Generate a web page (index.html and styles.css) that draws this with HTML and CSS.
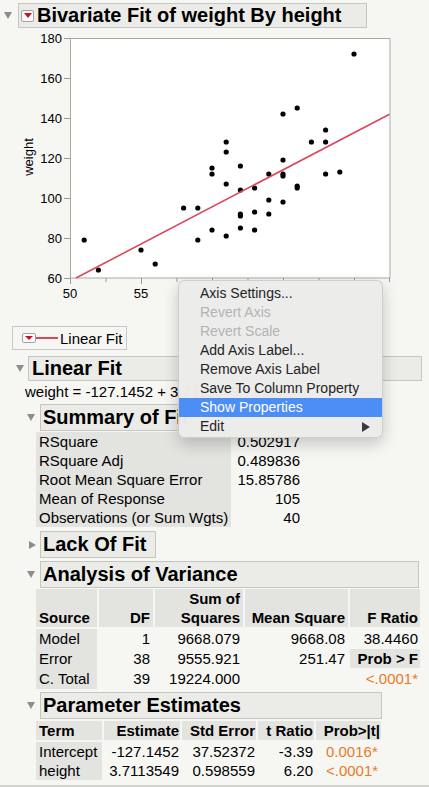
FILE: index.html
```html
<!DOCTYPE html>
<html>
<head>
<meta charset="utf-8">
<link rel="stylesheet" href="styles.css">
</head>
<body>
<div class="window">
  <div class="row row-top">
    <span class="tri-down"></span>
    <div class="hdr hdr-top"><span class="rbtn"></span><span class="title">Bivariate Fit of weight By height</span></div>
  </div>

  <svg class="plot" width="429" height="270" viewBox="0 30 429 270" xmlns="http://www.w3.org/2000/svg">
    <rect x="70.5" y="38.5" width="319.5" height="239.5" fill="#ffffff" stroke="#a9a9a9" stroke-width="1"/>
    <g stroke="#9a9a9a" stroke-width="1">
      <line x1="64" y1="38.5" x2="70" y2="38.5"/>
      <line x1="64" y1="78.5" x2="70" y2="78.5"/>
      <line x1="64" y1="118.5" x2="70" y2="118.5"/>
      <line x1="64" y1="158.5" x2="70" y2="158.5"/>
      <line x1="64" y1="198.5" x2="70" y2="198.5"/>
      <line x1="64" y1="238.5" x2="70" y2="238.5"/>
      <line x1="64" y1="278.5" x2="70" y2="278.5"/>
      <line x1="70.5" y1="278" x2="70.5" y2="284"/>
      <line x1="106" y1="278" x2="106" y2="282"/>
      <line x1="141.5" y1="278" x2="141.5" y2="284"/>
      <line x1="177" y1="278" x2="177" y2="282"/>
      <line x1="212.5" y1="278" x2="212.5" y2="284"/>
      <line x1="248" y1="278" x2="248" y2="282"/>
      <line x1="283.5" y1="278" x2="283.5" y2="284"/>
      <line x1="319" y1="278" x2="319" y2="282"/>
      <line x1="354.5" y1="278" x2="354.5" y2="284"/>
      <line x1="389.5" y1="278" x2="389.5" y2="282"/>
    </g>
    <g class="axis-text" text-anchor="end">
      <text x="62" y="43">180</text>
      <text x="62" y="83">160</text>
      <text x="62" y="123">140</text>
      <text x="62" y="163">120</text>
      <text x="62" y="203">100</text>
      <text x="62" y="243">80</text>
      <text x="62" y="283">60</text>
    </g>
    <g class="axis-text" text-anchor="middle">
      <text x="70" y="298">50</text>
      <text x="141" y="298">55</text>
    </g>
    <text class="axis-text" text-anchor="middle" transform="translate(32.5 157) rotate(-90)">weight</text>
    <g fill="#000">
      <circle cx="84.2" cy="240" r="2.6"/>
      <circle cx="98.4" cy="270" r="2.6"/>
      <circle cx="141" cy="250" r="2.6"/>
      <circle cx="155.2" cy="264" r="2.6"/>
      <circle cx="183.6" cy="208" r="2.6"/>
      <circle cx="197.8" cy="208" r="2.6"/>
      <circle cx="197.8" cy="240" r="2.6"/>
      <circle cx="212" cy="168" r="2.6"/>
      <circle cx="212" cy="174" r="2.6"/>
      <circle cx="212" cy="230" r="2.6"/>
      <circle cx="226.2" cy="142" r="2.6"/>
      <circle cx="226.2" cy="152" r="2.6"/>
      <circle cx="226.2" cy="184" r="2.6"/>
      <circle cx="226.2" cy="236" r="2.6"/>
      <circle cx="240.4" cy="166" r="2.6"/>
      <circle cx="240.4" cy="190" r="2.6"/>
      <circle cx="240.4" cy="214" r="2.6"/>
      <circle cx="240.4" cy="216" r="2.6"/>
      <circle cx="240.4" cy="228" r="2.6"/>
      <circle cx="254.6" cy="188" r="2.6"/>
      <circle cx="254.6" cy="212" r="2.6"/>
      <circle cx="254.6" cy="230" r="2.6"/>
      <circle cx="268.8" cy="174" r="2.6"/>
      <circle cx="268.8" cy="200" r="2.6"/>
      <circle cx="268.8" cy="214" r="2.6"/>
      <circle cx="283" cy="114" r="2.6"/>
      <circle cx="283" cy="160" r="2.6"/>
      <circle cx="283" cy="174" r="2.6"/>
      <circle cx="283" cy="176" r="2.6"/>
      <circle cx="283" cy="202" r="2.6"/>
      <circle cx="297.2" cy="108" r="2.6"/>
      <circle cx="297.2" cy="186" r="2.6"/>
      <circle cx="297.2" cy="188" r="2.6"/>
      <circle cx="311.4" cy="142" r="2.6"/>
      <circle cx="325.6" cy="130" r="2.6"/>
      <circle cx="325.6" cy="142" r="2.6"/>
      <circle cx="325.6" cy="174" r="2.6"/>
      <circle cx="339.8" cy="172" r="2.6"/>
      <circle cx="354" cy="54" r="2.6"/>
    </g>
    <line x1="76" y1="278" x2="389.5" y2="114.2" stroke="#d9485a" stroke-width="1.6"/>
  </svg>

  <div class="legend"><span class="rbtn rbtn-small"></span><span class="legline"></span><span class="legtext">Linear Fit</span></div>

  <div class="row row-lf">
    <span class="tri-down"></span>
    <div class="hdr hdr-lf"><span class="title">Linear Fit</span></div>
  </div>
  <div class="eq">weight = -127.1452 + 3.7113549*height</div>

  <div class="row row-sub">
    <span class="tri-down"></span>
    <div class="hdr hdr-sum"><span class="title">Summary of Fit</span></div>
  </div>
  <div class="sumtab">
    <div class="lbl">RSquare</div><div class="val">0.502917</div>
    <div class="lbl">RSquare Adj</div><div class="val">0.489836</div>
    <div class="lbl">Root Mean Square Error</div><div class="val">15.85786</div>
    <div class="lbl">Mean of Response</div><div class="val">105</div>
    <div class="lbl">Observations (or Sum Wgts)</div><div class="val">40</div>
  </div>

  <div class="row row-lack">
    <span class="tri-right"></span>
    <div class="hdr hdr-lack"><span class="title">Lack Of Fit</span></div>
  </div>

  <div class="row row-sub row-anova">
    <span class="tri-down"></span>
    <div class="hdr hdr-anova"><span class="title">Analysis of Variance</span></div>
  </div>
  <div class="anova anova-head">
    <div class="hc left">Source</div>
    <div class="hc">DF</div>
    <div class="hc">Sum of<br>Squares</div>
    <div class="hc">Mean Square</div>
    <div class="hc last">F Ratio</div>
  </div>
  <div class="anova anova-body">
    <div class="lbl">Model</div><div class="num">1</div><div class="num">9668.079</div><div class="num">9668.08</div><div class="num last">38.4460</div>
    <div class="lbl">Error</div><div class="num">38</div><div class="num">9555.921</div><div class="num">251.47</div><div class="num last probf">Prob &gt; F</div>
    <div class="lbl">C. Total</div><div class="num">39</div><div class="num">19224.000</div><div class="num"></div><div class="num last sig">&lt;.0001*</div>
  </div>

  <div class="row row-sub row-param">
    <span class="tri-down"></span>
    <div class="hdr hdr-param"><span class="title">Parameter Estimates</span></div>
  </div>
  <div class="param param-head">
    <div class="hc left">Term</div>
    <div class="hc">Estimate</div>
    <div class="hc">Std Error</div>
    <div class="hc">t Ratio</div>
    <div class="hc">Prob&gt;|t|</div>
  </div>
  <div class="param param-body">
    <div class="lbl">Intercept</div><div class="num">-127.1452</div><div class="num">37.52372</div><div class="num">-3.39</div><div class="prob sig">0.0016*</div>
    <div class="lbl">height</div><div class="num">3.7113549</div><div class="num">0.598559</div><div class="num">6.20</div><div class="prob sig">&lt;.0001*</div>
  </div>

  <div class="menu">
    <div class="mi">Axis Settings...</div>
    <div class="mi disabled">Revert Axis</div>
    <div class="mi disabled">Revert Scale</div>
    <div class="mi">Add Axis Label...</div>
    <div class="mi">Remove Axis Label</div>
    <div class="mi">Save To Column Property</div>
    <div class="mi active">Show Properties</div>
    <div class="mi sub"><span>Edit</span><span class="subarrow"></span></div>
  </div>
</div>
</body>
</html>
```

FILE: styles.css
```css
html, body {
  margin: 0;
  padding: 0;
  background: #f6f6f3;
}
body {
  font-family: "Liberation Sans", Arial, sans-serif;
  color: #000;
}
.window {
  position: relative;
  height: 787px;
  overflow: hidden;
  box-sizing: border-box;
  box-shadow: inset 0 -2px 0 #d2d2cf;
}
.row {
  display: flex;
  align-items: center;
  box-sizing: border-box;
}
.tri-down {
  width: 0;
  height: 0;
  border-left: 4px solid transparent;
  border-right: 4px solid transparent;
  border-top: 7px solid #8d8d8d;
  flex: none;
}
.tri-right {
  width: 0;
  height: 0;
  border-top: 4px solid transparent;
  border-bottom: 4px solid transparent;
  border-left: 7px solid #8d8d8d;
  flex: none;
}
.hdr {
  box-sizing: border-box;
  border: 1px solid #c5c5c2;
  background: #ebebe8;
  display: flex;
  align-items: center;
  height: 100%;
  font-weight: bold;
  font-size: 20px;
  white-space: nowrap;
  overflow: hidden;
}
.row-top {
  margin-top: 3px;
  height: 25px;
  padding-left: 4px;
}
.hdr-top {
  margin-left: 6px;
  width: 349px;
  padding-left: 2px;
}
.hdr-top .title {
  margin-left: 3px;
}
.rbtn {
  box-sizing: border-box;
  width: 13px;
  height: 12px;
  border: 1px solid #a3a3a3;
  border-radius: 2px;
  background: #fbfbfb;
  display: flex;
  justify-content: center;
  align-items: flex-start;
  padding-top: 2px;
  flex: none;
}
.rbtn::after {
  content: "";
  width: 0;
  height: 0;
  border-left: 4px solid transparent;
  border-right: 4px solid transparent;
  border-top: 5px solid #d0101e;
}
.rbtn-small {
  width: 14px;
  height: 10px;
  padding-top: 2px;
}
.rbtn-small::after {
  border-top-width: 4px;
}
.plot {
  display: block;
  margin-top: 2px;
}
.axis-text {
  font-family: "Liberation Sans", Arial, sans-serif;
  font-size: 13px;
  fill: #000;
}
.legend {
  box-sizing: border-box;
  margin: 26px 0 0 12px;
  width: 115px;
  height: 24px;
  border: 1px solid #c8c8c5;
  display: flex;
  align-items: center;
  padding-left: 9px;
}
.legline {
  width: 22px;
  height: 2px;
  background: #d9485a;
  flex: none;
}
.legtext {
  margin-left: 2px;
  font-size: 15px;
}
.row-lf {
  margin-top: 6px;
  height: 25px;
  padding-left: 16px;
}
.hdr-lf {
  margin-left: 4px;
  width: 394px;
  padding-left: 3px;
}
.eq {
  height: 22px;
  line-height: 22px;
  padding-left: 25px;
  font-size: 15px;
  white-space: nowrap;
}
.row-sub {
  margin-top: 1px;
  height: 27px;
  padding-left: 27px;
}
.row-sub .hdr {
  margin-left: 5px;
  padding-left: 2px;
}
.hdr-sum {
  width: 262px;
}
.sumtab {
  margin: 1px 0 0 36px;
  display: grid;
  grid-template-columns: 195px 72px;
  grid-auto-rows: 19px;
  font-size: 15px;
  line-height: 19px;
  width: 267px;
}
.sumtab .lbl {
  background: #e3e3e0;
  padding-left: 3px;
  white-space: nowrap;
}
.sumtab .val {
  text-align: right;
  padding-right: 3px;
}
.row-lack {
  margin-top: 4px;
  height: 27px;
  padding-left: 29px;
}
.hdr-lack {
  margin-left: 4px;
  width: 116px;
  padding-left: 2px;
}
.row-anova {
  margin-top: 3px;
}
.hdr-anova {
  width: 379px;
}
.anova {
  margin-left: 36px;
  display: grid;
  grid-template-columns: 61px 54px 88px 103px 70px;
  column-gap: 2px;
  width: 384px;
  font-size: 15px;
}
.anova-head {
  margin-top: 1px;
  height: 38px;
  margin-bottom: 2px;
}
.hc {
  background: #e3e3e0;
  font-weight: bold;
  line-height: 19px;
  text-align: right;
  padding-right: 3px;
  display: flex;
  flex-direction: column;
  justify-content: flex-end;
  white-space: nowrap;
}
.hc.left {
  text-align: left;
  padding-left: 3px;
  padding-right: 0;
}
.anova .hc.last {
  padding-right: 2px;
}
.anova-body {
  grid-auto-rows: 20px;
  line-height: 20px;
}
.lbl {
  background: #e3e3e0;
  padding-left: 3px;
  white-space: nowrap;
}
.num {
  text-align: right;
  padding-right: 3px;
  white-space: nowrap;
}
.anova .num.last {
  padding-right: 2px;
}
.probf {
  background: #e3e3e0;
  font-weight: bold;
  height: 19px;
  line-height: 19px;
}
.sig {
  color: #ec7a1c;
}
.row-param {
  margin-top: 3px;
}
.hdr-param {
  width: 342px;
}
.param {
  margin-left: 36px;
  display: grid;
  grid-template-columns: 66px 76px 74px 56px 65px;
  column-gap: 2px;
  width: 345px;
  font-size: 15px;
}
.param-head {
  margin-top: 2px;
  height: 19px;
  margin-bottom: 2px;
}
.param .hc {
  padding-right: 1px;
}
.param .hc.left {
  padding-left: 3px;
}
.param-body {
  grid-auto-rows: 19px;
  line-height: 19px;
}
.param .num {
  padding-right: 1px;
}
.prob {
  padding-left: 10px;
  white-space: nowrap;
}
.menu {
  position: absolute;
  left: 178px;
  top: 280px;
  width: 205px;
  box-sizing: border-box;
  padding: 3px 0 1px;
  background: rgba(236, 236, 235, 0.98);
  border: 1px solid rgba(0, 0, 0, 0.13);
  border-radius: 6px;
  box-shadow: 0 6px 16px rgba(0, 0, 0, 0.2);
  font-size: 14px;
}
.mi {
  height: 19px;
  line-height: 19px;
  padding-left: 21px;
  color: #242424;
  white-space: nowrap;
}
.mi.disabled {
  color: #b3b3b3;
}
.mi.active {
  background: #4c8df6;
  color: #fff;
}
.mi.sub {
  display: flex;
  justify-content: space-between;
  align-items: center;
  padding-right: 12px;
}
.subarrow {
  width: 0;
  height: 0;
  border-top: 5px solid transparent;
  border-bottom: 5px solid transparent;
  border-left: 8px solid #3a3a3a;
}
```
